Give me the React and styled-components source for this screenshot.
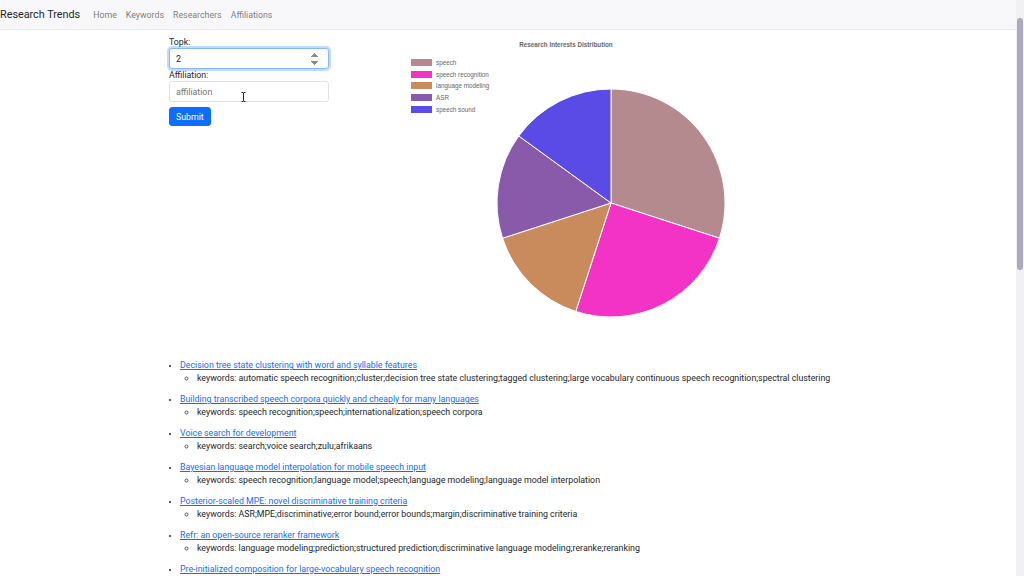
import React from "react";
import styled, { createGlobalStyle } from "styled-components";

const Global = createGlobalStyle`
  html { background: #fff; }
  body {
    margin: 0;
    background: #fff;
    font-family: Roboto, "Noto Sans", sans-serif;
    font-size: 8.8px;
    color: #212529;
  }
  * { box-sizing: border-box; }
`;

const Scrollbar = styled.div`
  position: fixed;
  top: 0;
  right: 0;
  width: 8px;
  height: 100%;
  background: #f1f1f4;
  display: flex;
  flex-direction: column;
  align-items: center;
  padding-top: 18px;
`;

const Thumb = styled.div`
  width: 6px;
  height: 252px;
  border-radius: 3px;
  background: #aaaabb;
`;

const Navbar = styled.nav`
  height: 30px;
  background: #f8f8fa;
  border-bottom: 1px solid #ececf0;
  display: flex;
  align-items: center;
  gap: 13px;
`;

const Brand = styled.a`
  font-size: 10.8px;
  color: #212529;
  text-decoration: none;
`;

const NavLinks = styled.div`
  display: flex;
  gap: 9px;
`;

const NavLink = styled.a`
  color: rgba(0, 0, 0, 0.55);
  text-decoration: none;
  font-size: 8.8px;
`;

const Top = styled.div`
  display: flex;
  padding-left: 169px;
  padding-top: 6px;
  gap: 71px;
`;

const Form = styled.form`
  width: 160px;
  display: flex;
  flex-direction: column;
`;

const Label = styled.label`
  font-size: 8.8px;
  line-height: 12px;
`;

const Field = styled.div`
  position: relative;
  margin-bottom: ${(p) => p.$mb || 0}px;
`;

const Input = styled.input`
  width: 100%;
  height: 21px;
  padding: 0 6px;
  font-family: inherit;
  font-size: 8.8px;
  color: #212529;
  background: #fff;
  border: 1px solid ${(p) => (p.$focus ? "#86b7fe" : "#dee2e6")};
  border-radius: 3px;
  outline: none;
  box-shadow: ${(p) => (p.$focus ? "0 0 0 2px rgba(13,110,253,0.25)" : "none")};
  &::placeholder { color: #6c757d; }
  &::-webkit-inner-spin-button { opacity: 1; height: 14px; }
`;

const Cursor = styled.svg`
  position: absolute;
  left: 72px;
  top: 11px;
`;

const Button = styled.button`
  align-self: flex-start;
  height: 19px;
  padding: 0 6px;
  background: #0d6efd;
  color: #fff;
  border: 1px solid #0d6efd;
  border-radius: 3px;
  font-family: inherit;
  font-size: 8.8px;
`;

const Chart = styled.div`
  width: 332px;
  display: flex;
  flex-direction: column;
  padding-top: 5px;
`;

const ChartTitle = styled.div`
  text-align: center;
  font-family: "Liberation Sans", Arial, sans-serif;
  font-weight: bold;
  font-size: 6.3px;
  color: #666;
  margin-bottom: 11px;
`;

const ChartBody = styled.div`
  display: flex;
  align-items: flex-start;
  padding-left: 11px;
`;

const Legend = styled.div`
  width: 85px;
  display: flex;
  flex-direction: column;
  gap: 4.7px;
`;

const LegendItem = styled.div`
  display: flex;
  align-items: center;
  gap: 4px;
  font-family: "Liberation Sans", Arial, sans-serif;
  font-size: 6.3px;
  color: #666;
  height: 7px;
`;

const Swatch = styled.span`
  width: 21px;
  height: 7px;
  background: ${(p) => p.$c};
`;

const PieWrap = styled.svg`
  margin-top: 29px;
  display: block;
`;

const List = styled.ul`
  margin: 41px 0 0 0;
  padding-left: 180px;
  list-style: disc;
  font-size: 8.8px;
  line-height: 13px;
  & > li { margin-bottom: 8px; }
  & > li::marker { font-size: 7.5px; }
`;

const Title = styled.a`
  color: #0d6efd;
  text-decoration: underline;
`;

const SubList = styled.ul`
  margin: 0;
  padding-left: 17px;
  list-style: circle;
  & > li::marker { font-size: 9px; color: #555; }
`;

const slices = [
  { label: "speech", v: 30, c: "#b58a8e" },
  { label: "speech recognition", v: 25, c: "#f233c6" },
  { label: "language modeling", v: 15, c: "#c98a5c" },
  { label: "ASR", v: 15, c: "#8a5aaa" },
  { label: "speech sound", v: 15, c: "#5b4be6" },
];

function Pie() {
  const r = 114;
  const cx = 115;
  const cy = 115;
  const total = slices.reduce((s, x) => s + x.v, 0);
  let a = 0;
  const pt = (ang) => [cx + r * Math.sin(ang), cy - r * Math.cos(ang)];
  return (
    <PieWrap width="230" height="230" viewBox="0 0 230 230">
      {slices.map((s) => {
        const a0 = a;
        const a1 = a + (s.v / total) * Math.PI * 2;
        a = a1;
        const [x0, y0] = pt(a0);
        const [x1, y1] = pt(a1);
        const large = a1 - a0 > Math.PI ? 1 : 0;
        return (
          <path
            key={s.label}
            d={`M${cx},${cy} L${x0},${y0} A${r},${r} 0 ${large} 1 ${x1},${y1} Z`}
            fill={s.c}
            stroke="#fff"
            strokeWidth="1"
          />
        );
      })}
    </PieWrap>
  );
}

const papers = [
  ["Decision tree state clustering with word and syllable features", "automatic speech recognition;cluster;decision tree state clustering;tagged clustering;large vocabulary continuous speech recognition;spectral clustering"],
  ["Building transcribed speech corpora quickly and cheaply for many languages", "speech recognition;speech;internationalization;speech corpora"],
  ["Voice search for development", "search;voice search;zulu;afrikaans"],
  ["Bayesian language model interpolation for mobile speech input", "speech recognition;language model;speech;language modeling;language model interpolation"],
  ["Posterior-scaled MPE: novel discriminative training criteria", "ASR;MPE;discriminative;error bound;error bounds;margin;discriminative training criteria"],
  ["Refr: an open-source reranker framework", "language modeling;prediction;structured prediction;discriminative language modeling;reranke;reranking"],
  ["Pre-initialized composition for large-vocabulary speech recognition", "speech recognition;composition;weighted finite-state transducers;decoding"],
];

export default function App() {
  return (
    <>
      <Global />
      <Navbar>
        <Brand href="#">Research Trends</Brand>
        <NavLinks>
          <NavLink href="#">Home</NavLink>
          <NavLink href="#">Keywords</NavLink>
          <NavLink href="#">Researchers</NavLink>
          <NavLink href="#">Affiliations</NavLink>
        </NavLinks>
      </Navbar>
      <Top>
        <Form onSubmit={(e) => e.preventDefault()}>
          <Label>Topk:</Label>
          <Field>
            <Input type="number" defaultValue="2" $focus />
          </Field>
          <Label>Affiliation:</Label>
          <Field $mb={5}>
            <Input type="text" placeholder="affiliation" />
            <Cursor width="5" height="10" viewBox="0 0 5 10">
              <path d="M0.5 0.5h1.5l0.5 0.5 0.5-0.5h1.5M2.5 1v8M0.5 9.5h1.5l0.5-0.5 0.5 0.5h1.5" stroke="#222" strokeWidth="1" fill="none" />
            </Cursor>
          </Field>
          <Button type="submit">Submit</Button>
        </Form>
        <Chart>
          <ChartTitle>Research Interests Distribution</ChartTitle>
          <ChartBody>
            <Legend>
              {slices.map((s) => (
                <LegendItem key={s.label}>
                  <Swatch $c={s.c} />
                  {s.label}
                </LegendItem>
              ))}
            </Legend>
            <Pie />
          </ChartBody>
        </Chart>
      </Top>
      <List>
        {papers.map(([t, k]) => (
          <li key={t}>
            <Title href="#">{t}</Title>
            <SubList>
              <li>keywords: {k}</li>
            </SubList>
          </li>
        ))}
      </List>
      <Scrollbar>
        <Thumb />
      </Scrollbar>
    </>
  );
}
